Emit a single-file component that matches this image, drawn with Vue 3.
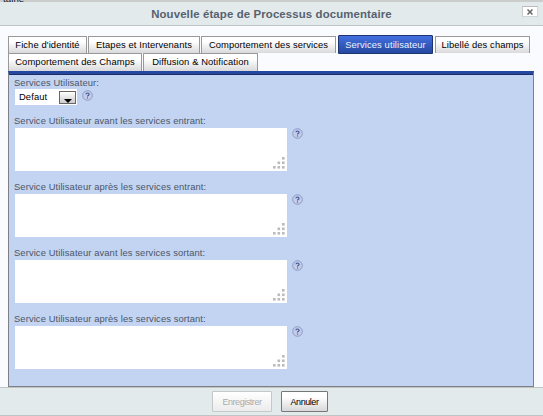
<script setup>
const tabRows = [
  [
    { label: "Fiche d'identité", w: 79 },
    { label: 'Etapes et Intervenants', w: 112 },
    { label: 'Comportement des services', w: 135 },
    { label: 'Services utilisateur', w: 95, active: true },
    { label: 'Libellé des champs', w: 95 },
  ],
  [
    { label: 'Comportement des Champs', w: 134 },
    { label: 'Diffusion & Notification', w: 115 },
  ],
]
const fields = [
  'Service Utilisateur avant les services entrant:',
  'Service Utilisateur après les services entrant:',
  'Service Utilisateur avant les services sortant:',
  'Service Utilisateur après les services sortant:',
]
const dots = [[9, 0], [4.5, 4.5], [9, 4.5], [0, 9], [4.5, 9], [9, 9]]
</script>

<template>
  <div class="dialog">
    <div class="page-behind"><span>taine</span></div>
    <header class="header">
      <h1>Nouvelle étape de Processus documentaire</h1>
      <button class="close" aria-label="Fermer">
        <svg width="6" height="6" viewBox="0 0 6 6"><path d="M.5 .5L5.5 5.5M5.5 .5L.5 5.5" /></svg>
      </button>
    </header>
    <main class="body">
      <nav class="tabs">
        <div v-for="(row, i) in tabRows" :key="i" class="row">
          <div v-for="tab in row" :key="tab.label" class="tab" :class="{ active: tab.active }" :style="{ width: tab.w + 'px' }">{{ tab.label }}</div>
        </div>
      </nav>
      <section class="panel">
        <label class="label">Services Utilisateur:</label>
        <div class="line">
          <div class="select">
            <span>Defaut</span>
            <span class="arrow"><svg width="8" height="4" viewBox="0 0 8 4"><path d="M0 0H8L4 4Z" /></svg></span>
          </div>
          <svg class="help" width="11" height="11" viewBox="0 0 11 11"><circle cx="5.5" cy="5.5" r="4.8" /><path d="M3.9 4.3Q4 3 5.5 3T7.1 4.2Q7.1 5 6.2 5.4T5.5 6.5M5.5 7.4V8.5" /></svg>
        </div>
        <div v-for="f in fields" :key="f" class="field">
          <label class="label">{{ f }}</label>
          <div class="line">
            <div class="area">
              <svg width="12" height="12" viewBox="0 0 12 12"><rect v-for="(d, i) in dots" :key="i" :x="d[0]" :y="d[1]" width="2.6" height="2.6" /></svg>
            </div>
            <svg class="help" width="11" height="11" viewBox="0 0 11 11"><circle cx="5.5" cy="5.5" r="4.8" /><path d="M3.9 4.3Q4 3 5.5 3T7.1 4.2Q7.1 5 6.2 5.4T5.5 6.5M5.5 7.4V8.5" /></svg>
          </div>
        </div>
      </section>
    </main>
    <footer class="footer">
      <button class="btn save" disabled>Enregistrer</button>
      <button class="btn cancel">Annuler</button>
    </footer>
  </div>
</template>

<style scoped>
* { box-sizing: border-box; }
.dialog { width: 543px; height: 416px; overflow: hidden; display: flex; flex-direction: column; background: #fafbfe; font-family: "Liberation Sans", Arial, sans-serif; font-size: 9.4px; letter-spacing: 0.1px; }
.page-behind { height: 2px; flex: none; background: #cbcccc; overflow: hidden; color: #222; }
.page-behind span { display: block; margin: -6px 0 0 3px; font-size: 9.6px; line-height: 10px; }
.header { height: 24px; flex: none; background: #e2eaeb; border-bottom: 1px solid #c0c5c6; position: relative; text-align: center; }
h1 { margin: 0; padding-top: 6px; font-size: 11.4px; line-height: 13px; letter-spacing: 0.13px; color: #58616f; }
.close { position: absolute; right: 5px; top: 4px; width: 16px; height: 11px; padding: 0; border: 1px solid #d3d6d7; background: #fff; display: flex; align-items: center; justify-content: center; border-top-color: #bbb; border-left-color: #ccc; }
.close path { stroke: #666; stroke-width: 1.5; }
.body { height: 361px; flex: none; padding: 10px 9px 0 8px; }
.row { display: flex; gap: 1px; height: 17px; }
.row + .row { height: 18px; }
.tab { flex: none; border: 1px solid #999; border-bottom: 0; background: linear-gradient(#fff 30%, #d9d9db); text-align: center; line-height: 16px; color: #000; white-space: nowrap; border-radius: 1px 1px 0 0; }
.tab.active { margin-top: -1px; margin-right: 1px; margin-left: 1px; height: 19px; line-height: 18px; background: linear-gradient(#426fdf, #2549a1); border: 1px solid #1d3370; color: #eef2ff; }
.panel { height: 316px; width: 526px; border: 1px solid #7d7f85; border-top: 3px solid #2448a0; background: #c2d4f2; box-shadow: inset 0 1px #1c2e68; padding: 4px 0 0 5px; }
.label { display: block; height: 11px; line-height: 9px; color: #4c5668; white-space: nowrap; }
.line { display: flex; gap: 5px; padding-left: 1px; }
.select { width: 62px; height: 16px; background: #fff; display: flex; justify-content: space-between; align-items: center; padding: 0 1px 0 4px; line-height: 10px; }
.arrow { width: 17px; height: 13px; margin-top: 1px; border: 1px solid #666; background: linear-gradient(#fff, #ccc); display: flex; justify-content: center; align-items: flex-end; }
.arrow svg { display: block; }
.help { flex: none; margin-top: 1px; }
.help circle { fill: #c4cce8; stroke: #8c9bc3; stroke-width: 1; }
.help path { fill: none; stroke: #364e96; stroke-width: 1.1; }
.field { padding-top: 11px; height: 66px; }
.field .label { margin-bottom: 1px; }
.field .help { margin-top: 0; }
.area { width: 272px; height: 43px; background: #fff; display: flex; align-items: flex-end; justify-content: flex-end; padding: 0 2px 2px 0; }
.area rect { fill: #bbb; }
.footer { height: 29px; flex: none; border-top: 1px solid #c0c4c5; border-bottom: 1px solid #c0c4c5; background: #e2eaeb; display: flex; justify-content: center; gap: 9px; padding: 3px 3px 0 0; }
.btn { height: 21px; padding: 0; border: 1px solid #777; border-radius: 1px; background: linear-gradient(#fff 25%, #d8d8da); font: 9px/18px "Liberation Sans", Arial, sans-serif; letter-spacing: -0.45px; color: #000; }
.save { width: 60px; color: #aaa; border-color: #c5c8c9; background: linear-gradient(#fff, #ececee); }
.cancel { width: 47px; }
</style>
<style>
body { margin: 0; background: #fafbfe; }
</style>
